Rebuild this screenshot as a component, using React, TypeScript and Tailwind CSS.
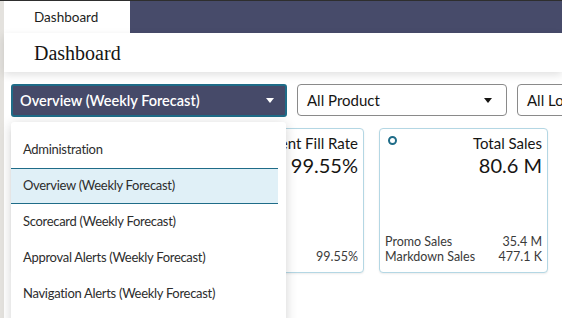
import React from 'react';

interface Card {
  title: string;
  value: string;
  icon?: boolean;
  rows: { label: string; value: string }[];
}

const cards: Card[] = [
  { title: 'Forecast Accuracy', value: '92.4%', rows: [{ label: 'Bias', value: '1.2%' }] },
  { title: 'Shipment Fill Rate', value: '99.55%', rows: [{ label: 'Order Fill Rate', value: '99.55%' }] },
  {
    title: 'Total Sales',
    value: '80.6 M',
    icon: true,
    rows: [
      { label: 'Promo Sales', value: '35.4 M' },
      { label: 'Markdown Sales', value: '477.1 K' },
    ],
  },
];

const menuItems = [
  'Administration',
  'Overview (Weekly Forecast)',
  'Scorecard (Weekly Forecast)',
  'Approval Alerts (Weekly Forecast)',
  'Navigation Alerts (Weekly Forecast)',
];

const Caret = ({ color }: { color: string }) => (
  <svg width="8" height="5" viewBox="0 0 8 5" className="shrink-0">
    <path d="M0 0h8L4 5z" fill={color} />
  </svg>
);

const App: React.FC = () => {
  const selected = 'Overview (Weekly Forecast)';

  return (
    <div
      className="relative w-[562px] h-[318px] overflow-hidden flex bg-white border-t border-[#2e2e2e]"
      style={{ fontFamily: 'Lato, "Open Sans", sans-serif' }}
    >
      <div className="w-1 shrink-0 bg-[#e4e2de]" />
      <div className="flex-1 flex flex-col min-w-0">
        <div className="h-8 bg-[#474b6a] flex">
          <div className="w-[126px] h-full bg-white flex items-center pl-[30px] text-[13.5px] text-[#1d1d1d]">
            Dashboard
          </div>
        </div>
        <div className="h-[39px] bg-white shadow-[0_3px_8px_rgba(0,0,0,0.12)] flex items-center pl-[30px] relative z-10">
          <span className="text-[20px] text-[#161513]" style={{ fontFamily: '"Liberation Serif", serif' }}>
            Dashboard
          </span>
        </div>
        <div className="flex-1 bg-white px-[7px] pt-[12px]">
          <div className="flex gap-[10px] whitespace-nowrap">
            <button className="w-[276px] h-[33px] shrink-0 rounded-[3px] bg-[#464a69] border-2 border-[#1f6c88] flex items-center justify-between pl-[7px] pr-[11px] text-white text-[14.5px] font-semibold">
              <span>Overview (Weekly Forecast)</span>
              <Caret color="#ffffff" />
            </button>
            <div className="w-[210px] h-[32px] shrink-0 rounded-[4px] border border-[#8a8a8a] flex items-center justify-between pl-[9px] pr-[14px] text-[15px] text-[#161513]">
              <span>All Product</span>
              <Caret color="#161513" />
            </div>
            <div className="w-[210px] h-[32px] shrink-0 rounded-[4px] border border-[#8a8a8a] flex items-center pl-[9px] text-[15px] text-[#161513]">
              <span>All Location</span>
            </div>
          </div>
          <div className="flex gap-[15px] mt-[11px]">
            {cards.map((c) => (
              <div
                key={c.title}
                className="relative w-[169px] h-[145px] shrink-0 rounded-[4px] border border-[#b4d7e4] bg-white flex flex-col px-[5px] pt-[5px] pb-[8px] shadow-[0_1px_2px_rgba(0,0,0,0.08)]"
              >
                {c.icon && (
                  <span className="absolute left-[8px] top-[7px] w-[9px] h-[9px] rounded-full border-2 border-[#1f6c88]" />
                )}
                <div className="text-right text-[15px] leading-[18px] text-[#161513]">{c.title}</div>
                <div className="text-right text-[20px] leading-[26px] text-[#161513]">{c.value}</div>
                <div className="mt-auto text-[12.5px] leading-[15px] text-[#3a3a3a]">
                  {c.rows.map((r) => (
                    <div key={r.label} className="flex justify-between">
                      <span>{r.label}</span>
                      <span>{r.value}</span>
                    </div>
                  ))}
                </div>
              </div>
            ))}
          </div>
        </div>
      </div>

      <div className="absolute left-[11px] top-[121px] w-[275px] h-[220px] bg-white rounded-t-[3px] shadow-[0_2px_12px_rgba(0,0,0,0.18)] pt-[10px] pr-[8px] z-20">
        {menuItems.map((m) => (
          <div
            key={m}
            className={`h-9 flex items-center pl-[12px] text-[13px] tracking-[-0.3px] text-[#2d2d2d] ${
              m === selected ? 'bg-[#e0f0f7] border-y border-[#1f6c88]' : ''
            }`}
          >
            {m}
          </div>
        ))}
      </div>
    </div>
  );
};

export default App;
